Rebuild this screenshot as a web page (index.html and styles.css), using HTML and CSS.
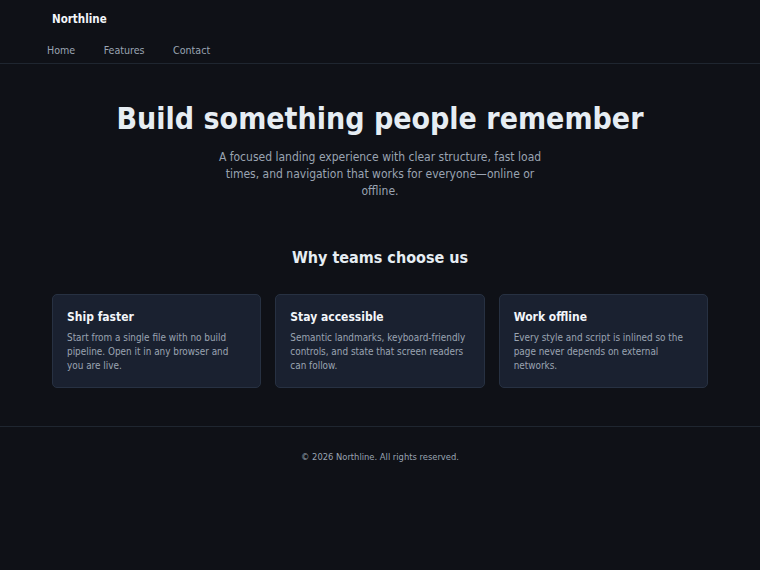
FILE: index.html
```html
<!DOCTYPE html>
<html lang="en">
<head>
    <meta charset="UTF-8">
    <meta name="viewport" content="width=device-width, initial-scale=1.0">
    <title>Northline</title>
    <link rel="stylesheet" href="styles.css">
</head>
<body>
    <header class="site-header">
        <div class="brand">Northline</div>
        <nav class="main-nav" aria-label="Main">
            <a href="#">Home</a>
            <a href="#features">Features</a>
            <a href="#contact">Contact</a>
        </nav>
    </header>

    <main>
        <section class="hero">
            <h1>Build something people remember</h1>
            <p>A focused landing experience with clear structure, fast load times, and navigation that works for everyone—online or offline.</p>
        </section>

        <section class="features" id="features">
            <h2>Why teams choose us</h2>
            <div class="card-grid">
                <article class="card">
                    <h3>Ship faster</h3>
                    <p>Start from a single file with no build pipeline. Open it in any browser and you are live.</p>
                </article>
                <article class="card">
                    <h3>Stay accessible</h3>
                    <p>Semantic landmarks, keyboard-friendly controls, and state that screen readers can follow.</p>
                </article>
                <article class="card">
                    <h3>Work offline</h3>
                    <p>Every style and script is inlined so the page never depends on external networks.</p>
                </article>
            </div>
        </section>
    </main>

    <footer class="site-footer" id="contact">
        <p>&copy; 2026 Northline. All rights reserved.</p>
    </footer>
</body>
</html>
```

FILE: styles.css
```css
* {
    box-sizing: border-box;
}
body {
    margin: 0;
    background-color: #0f1117;
    color: #e6edf3;
    font-family: "DejaVu Sans Condensed", "DejaVu Sans", sans-serif;
    min-height: 570px;
}
.site-header {
    border-bottom: 1px solid #1f2630;
}
.brand {
    max-width: 656px;
    margin: 0 auto;
    padding: 12px 0 0;
    font-size: 11.5px;
    font-weight: bold;
    line-height: 14px;
    color: #f3f6fa;
}
.main-nav {
    max-width: 666px;
    margin: 0 auto;
    display: flex;
    gap: 28.5px;
    padding: 17px 0 0;
}
.main-nav a {
    color: #9aa4b2;
    text-decoration: none;
    font-size: 10.6px;
    line-height: 14px;
    padding: 0 0 6px;
}
.hero {
    text-align: center;
    padding: 37px 20px 0;
}
.hero h1 {
    margin: 0;
    font-size: 30px;
    line-height: 36px;
    color: #e6edf3;
}
.hero p {
    max-width: 340px;
    margin: 12px auto 0;
    font-size: 12px;
    line-height: 17px;
    color: #9aa4b2;
}
.features {
    max-width: 656px;
    margin: 0 auto;
    padding: 48px 0 38px;
}
.features h2 {
    margin: 0 0 26px;
    text-align: center;
    font-size: 16px;
    line-height: 20px;
}
.card-grid {
    display: grid;
    grid-template-columns: repeat(3, 1fr);
    gap: 14px;
}
.card {
    background-color: #1a2130;
    border: 1px solid #273142;
    border-radius: 5px;
    padding: 15px 14px 14px;
}
.card h3 {
    margin: 0 0 6px;
    font-size: 12px;
    line-height: 15px;
    color: #f3f6fa;
}
.card p {
    margin: 0;
    font-size: 9.9px;
    line-height: 14px;
    color: #9aa4b2;
}
.site-footer {
    border-top: 1px solid #1f2630;
    text-align: center;
    padding: 24px 0;
}
.site-footer p {
    margin: 0;
    font-size: 9.3px;
    line-height: 12px;
    color: #9aa4b2;
}
```
